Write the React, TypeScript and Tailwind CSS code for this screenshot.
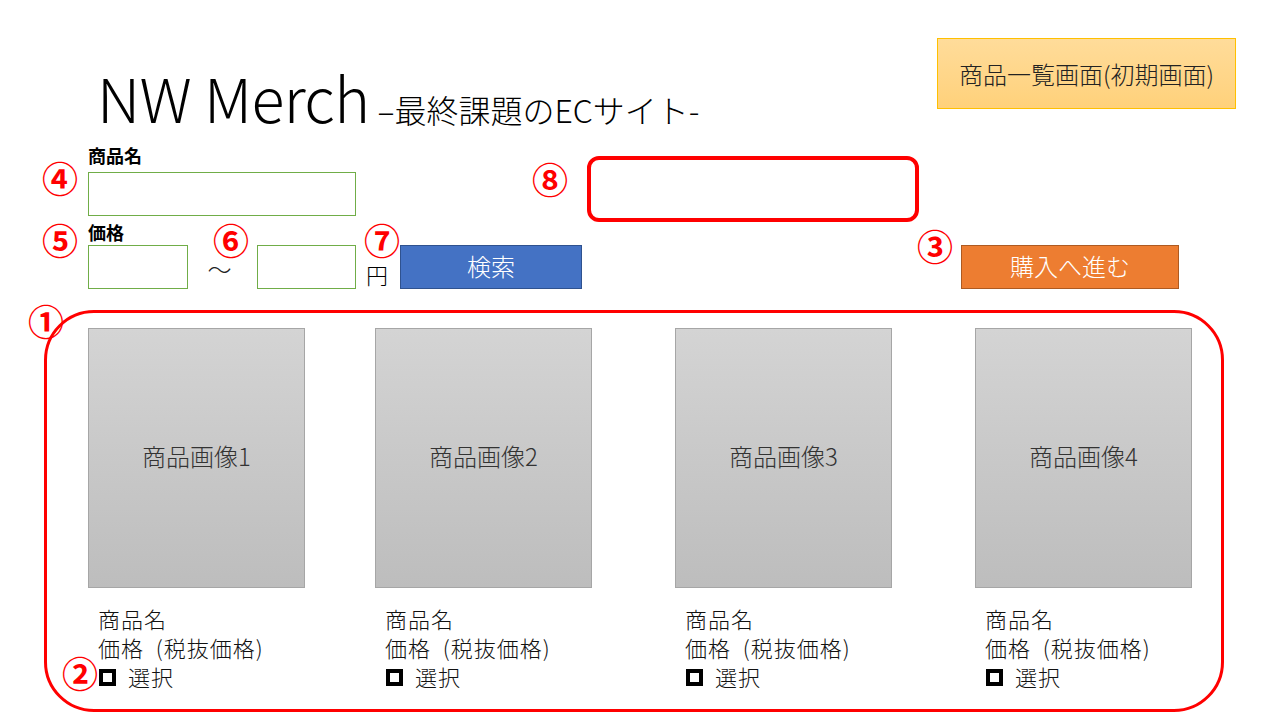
import React from "react";

const JP = { fontFamily: '"Noto Sans CJK JP", "Noto Sans", sans-serif' };

function Mark({ ch, x, y }: { ch: string; x: number; y: number }) {
  return (
    <div
      className="absolute w-[36px] h-[34px] flex items-center justify-center text-[36px] leading-none font-bold text-[#ff0000]"
      style={{ left: x - 18, top: y - 17 }}
    >
      {ch}
    </div>
  );
}

function Card({ n }: { n: number }) {
  return (
    <div className="w-[217px]">
      <div className="h-[260px] border border-[#a6a6a6] bg-gradient-to-b from-[#d4d4d4] to-[#bdbdbd] flex items-center justify-center text-[24px] text-[#333333] font-light pb-[4px]">
        商品画像{n}
      </div>
      <div className="mt-[16px] pl-[10px] text-[22px] leading-[29px] tracking-[1px] text-[#111111] font-light">
        <div>商品名</div>
        <div className="whitespace-nowrap [word-spacing:6px]">価格 (税抜価格)</div>
        <div className="flex items-center">
          <span className="inline-block w-[17px] h-[17px] border-[4px] border-black ml-[1px] mr-[12px] mt-[1px]" />
          <span>選択</span>
        </div>
      </div>
    </div>
  );
}

export default function App() {
  return (
    <div className="relative w-[1280px] h-[720px] bg-white overflow-hidden" style={JP}>
      {/* header */}
      <div className="flex justify-between h-[145px]">
        <div className="pl-[97px] pt-[66px] flex items-baseline">
          <span className="text-[61px] leading-none font-extralight text-black tracking-[-0.6px]">NW Merch</span>
          <span className="ml-[8px] text-[32px] leading-none font-light text-black">–最終課題のECサイト-</span>
        </div>
        <div className="mt-[38px] mr-[44px] w-[299px] h-[71px] border border-[#ffc000] bg-gradient-to-b from-[#ffdc9a] to-[#ffd17a] flex items-center justify-center text-[24px] text-[#222222] font-light">
          商品一覧画面(初期画面)
        </div>
      </div>

      {/* form */}
      <div className="relative">
        <div className="pl-[88px]">
          <div className="h-[20px] text-[18px] leading-[20px] font-bold text-black">商品名</div>
          <div className="mt-[7px] w-[268px] h-[44px] border border-[#70ad47] bg-white" />
          <div className="mt-[6px] h-[20px] text-[18px] leading-[20px] font-bold text-black">価格</div>
          <div className="mt-[3px] flex items-stretch h-[44px]">
            <div className="w-[100px] border border-[#70ad47]" />
            <div className="w-[69px] flex items-center justify-center text-[24px] leading-[20px] text-[#222222] font-light pt-[4px] pr-[6px]">〜</div>
            <div className="w-[99px] border border-[#70ad47]" />
            <div className="w-[44px] pl-[10px] flex items-end text-[22px] leading-[30px] font-light text-black">円</div>
            <div className="w-[182px] border border-[#2f528f] bg-[#4472c4] text-white text-[24px] font-light flex items-center justify-center pb-[3px]">
              検索
            </div>
            <div className="ml-auto mr-[101px] w-[218px] border border-[#ae5a21] bg-[#ed7d31] text-white text-[24px] font-light flex items-center justify-center pb-[3px]">
              購入へ進む
            </div>
          </div>
        </div>
        <div className="absolute left-[587px] top-[11px] w-[332px] h-[66px] border-[4px] border-[#ff0000] rounded-[12px]" />
      </div>

      {/* product list */}
      <div className="mt-[21px] ml-[44px] w-[1180px] h-[402px] border-[3px] border-[#ff0000] rounded-[50px] pt-[15px] pl-[41px]">
        <div className="grid grid-cols-[287px_300px_300px_217px]">
          <Card n={1} />
          <Card n={2} />
          <Card n={3} />
          <Card n={4} />
        </div>
      </div>

      <Mark ch="④" x={60} y={177} />
      <Mark ch="⑤" x={60} y={239} />
      <Mark ch="⑥" x={231} y={239} />
      <Mark ch="⑦" x={382} y={239} />
      <Mark ch="⑧" x={550} y={178} />
      <Mark ch="③" x={935} y={245} />
      <Mark ch="①" x={46} y={320} />
      <Mark ch="②" x={80} y={672} />
    </div>
  );
}
